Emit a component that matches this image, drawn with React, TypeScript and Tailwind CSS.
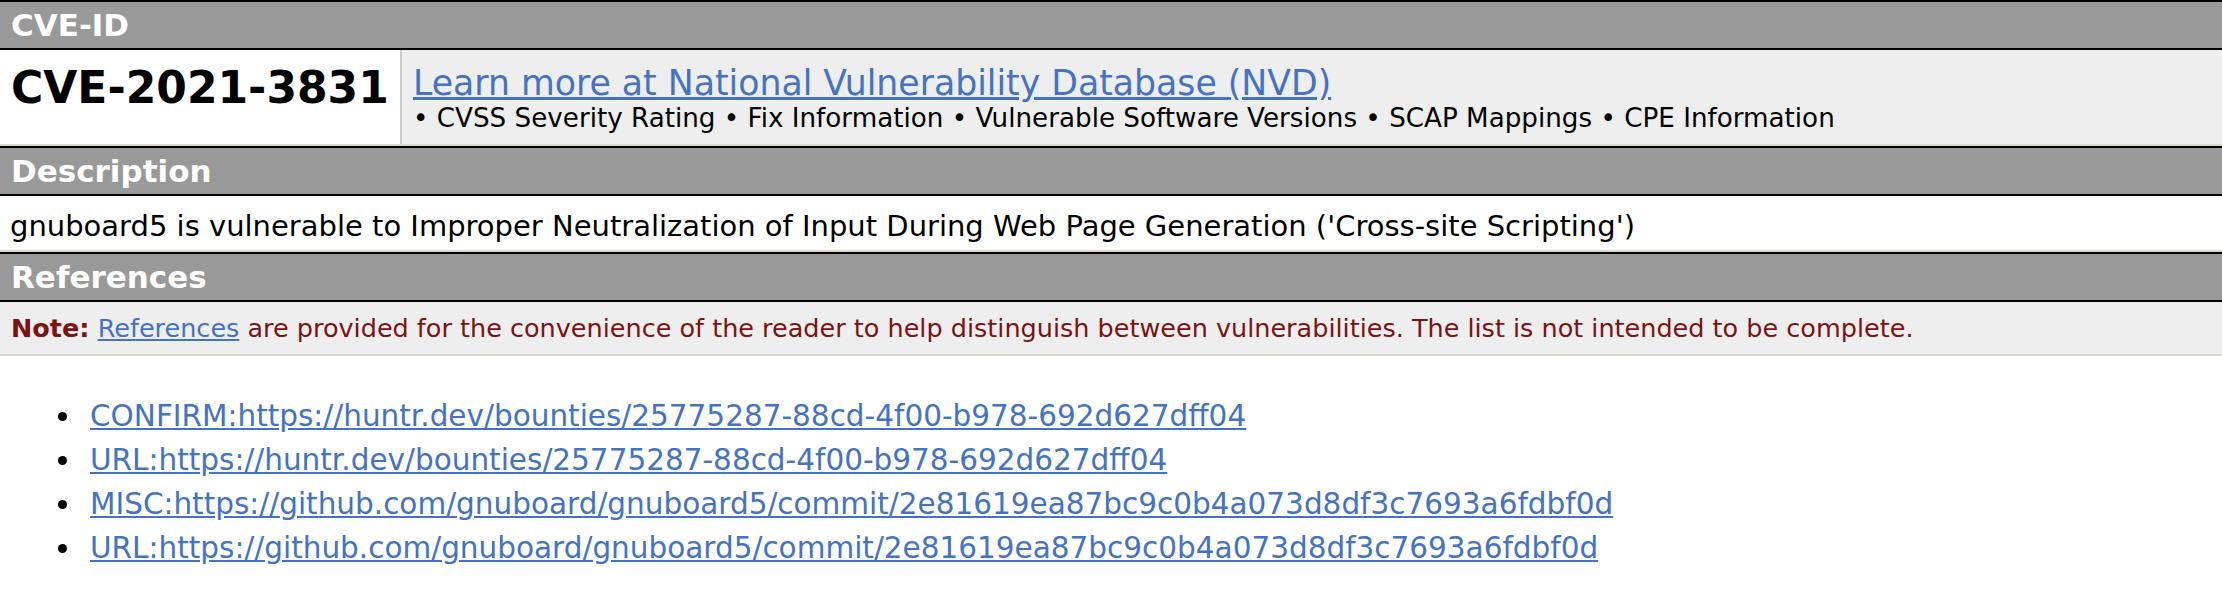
import React from "react";

const refs = [
  "CONFIRM:https://huntr.dev/bounties/25775287-88cd-4f00-b978-692d627dff04",
  "URL:https://huntr.dev/bounties/25775287-88cd-4f00-b978-692d627dff04",
  "MISC:https://github.com/gnuboard/gnuboard5/commit/2e81619ea87bc9c0b4a073d8df3c7693a6fdbf0d",
  "URL:https://github.com/gnuboard/gnuboard5/commit/2e81619ea87bc9c0b4a073d8df3c7693a6fdbf0d",
];

function Header({ children }: { children: React.ReactNode }) {
  return (
    <div className="h-[48px] border-t-2 border-black bg-[#999999] pl-[11px] text-[31px] font-bold leading-[47px] text-white">
      {children}
    </div>
  );
}

export default function App() {
  return (
    <div className="min-h-[604px] w-full bg-white font-['DejaVu_Sans',Verdana,sans-serif] text-black">
      <Header>CVE-ID</Header>
      <div className="flex h-[98px] border-y-2 border-t-black border-b-[#dcd8cf]">
        <div className="w-[402px] border-r-2 border-[#cccccc] bg-white pl-[11px] pt-[13px] text-[44px] font-bold leading-[50px]">
          CVE-2021-3831
        </div>
        <div className="flex-1 bg-[#eeeeee] pl-[11px] pt-[14px]">
          <div className="text-[34.7px] leading-[39px]">
            <a href="#" className="text-[#4472c4] underline">
              Learn more at National Vulnerability Database (NVD)
            </a>
          </div>
          <div className="text-[26.2px] leading-[30px]">
            • CVSS Severity Rating • Fix Information • Vulnerable Software Versions • SCAP Mappings • CPE Information
          </div>
        </div>
      </div>
      <Header>Description</Header>
      <div className="h-[58px] border-y-2 border-t-black border-b-[#dcd8cf] bg-white pl-[10px] pt-[13px] text-[29px] leading-[35px]">
        gnuboard5 is vulnerable to Improper Neutralization of Input During Web Page Generation ('Cross-site Scripting')
      </div>
      <Header>References</Header>
      <div className="h-[56px] border-y-2 border-t-black border-b-[#dcd8cf] bg-[#eeeeee] pl-[11px] pt-[11px] text-[25.5px] leading-[31px] text-[#7b1313]">
        <span className="font-bold">Note:</span>{" "}
        <a href="#" className="text-[#4472c4] underline">
          References
        </a>{" "}
        are provided for the convenience of the reader to help distinguish between vulnerabilities. The list is not intended to be complete.
      </div>
      <ul className="mt-[38px] flex flex-col">
        {refs.map((r) => (
          <li key={r} className="flex items-center pl-[58px] text-[29.5px] leading-[44px]">
            <span className="mr-[23px] h-[9px] w-[9px] shrink-0 rounded-full bg-black" />
            <a href="#" className="text-[#4472c4] underline">
              {r}
            </a>
          </li>
        ))}
      </ul>
    </div>
  );
}
